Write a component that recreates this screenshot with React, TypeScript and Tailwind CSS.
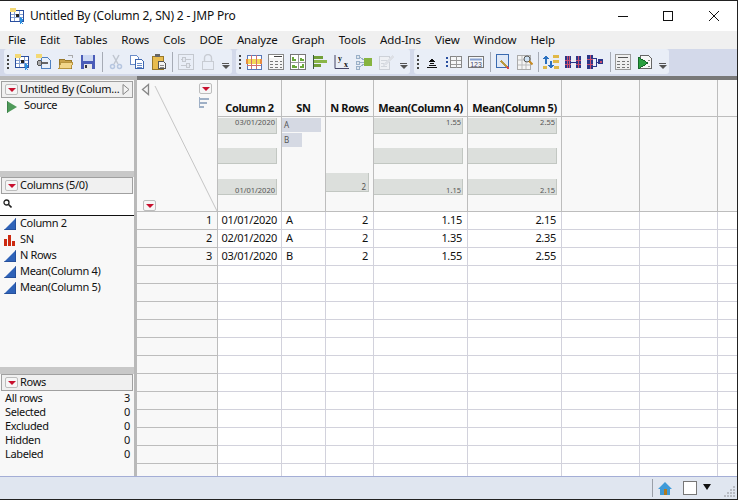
import type { ReactNode } from "react";

const menus = ["File", "Edit", "Tables", "Rows", "Cols", "DOE", "Analyze", "Graph", "Tools", "Add-Ins", "View", "Window", "Help"];
const font = "font-['Noto_Sans',sans-serif]";

function Ico({ children }: { children: ReactNode }) {
  return (
    <svg width="16" height="16" viewBox="0 0 16 16" shapeRendering="crispEdges">
      {children}
    </svg>
  );
}

function TableIcon() {
  return (
    <Ico>
      <rect x="1.5" y="2.5" width="13" height="11" fill="#fff" stroke="#2a4f9f" />
      <path d="M2 6h12M2 9.5h12M5.5 3v10M10 3v10" stroke="#86a0d0" />
      <rect x="1" y="0" width="6" height="4" fill="#f3d976" />
      <rect x="7" y="6" width="3" height="3" fill="#222" />
      <path d="M11 9l4 3-2 1 1 3-2-1-1 1z" fill="#2a8fe0" />
    </Ico>
  );
}
function WandIcon() {
  return (
    <Ico>
      <path d="M5.5 3.5h6l3 3v8h-9z" fill="#e8f0fa" stroke="#4f80c0" />
      <rect x="0" y="0" width="6" height="4" fill="#f3d976" />
      <rect x="3" y="8" width="9" height="2" fill="#666" />
      <circle cx="3.5" cy="9" r="2.5" fill="#aaa" stroke="#555" />
    </Ico>
  );
}
function OpenIcon() {
  return (
    <Ico>
      <path d="M1 5h5l1 1h6v8H1z" fill="#c9a24a" stroke="#98782a" />
      <path d="M3 8h12l-2 6H1z" fill="#f2d68a" stroke="#b8943e" />
      <path d="M10 1h4v3" fill="none" stroke="#aaa" />
    </Ico>
  );
}
function SaveIcon() {
  return (
    <Ico>
      <rect x="1" y="1" width="14" height="14" fill="#4a5cb8" />
      <rect x="3" y="1" width="10" height="6" fill="#ccd8f2" />
      <rect x="4" y="10" width="8" height="5" fill="#e8e8e8" />
      <rect x="5" y="11" width="2" height="3" fill="#334" />
    </Ico>
  );
}
function ScissorsIcon() {
  return (
    <Ico>
      <path d="M5 1l5 9M11 1l-5 9" stroke="#c0c6d0" strokeWidth="1.5" fill="none" shapeRendering="auto" />
      <circle cx="4.5" cy="12.5" r="2" fill="none" stroke="#b6c6e0" strokeWidth="1.5" shapeRendering="auto" />
      <circle cx="11.5" cy="12.5" r="2" fill="none" stroke="#b6c6e0" strokeWidth="1.5" shapeRendering="auto" />
    </Ico>
  );
}
function CopyIcon() {
  return (
    <Ico>
      <path d="M1.5 1.5h6l2 2v7h-8z" fill="#fff" stroke="#6a8cc8" />
      <path d="M6.5 5.5h6l2 2v7h-8z" fill="#fff" stroke="#3c66b0" />
      <path d="M8 9h5M8 11h5M8 13h5" stroke="#6a8cc8" />
    </Ico>
  );
}
function PasteIcon() {
  return (
    <Ico>
      <rect x="1" y="2" width="11" height="13" fill="#e8bc50" stroke="#98782a" />
      <rect x="4" y="0" width="5" height="3" fill="#666" />
      <path d="M7.5 7.5h5l2 2v5h-7z" fill="#f4f4f4" stroke="#555" />
      <path d="M9 11h4M9 13h4" stroke="#888" />
    </Ico>
  );
}
function ScriptBoxIcon() {
  return (
    <Ico>
      <rect x="0.5" y="0.5" width="15" height="15" fill="none" stroke="#c4c8cf" />
      <path d="M3 5h10M3 11h10" stroke="#c4c8cf" />
      <rect x="4.5" y="3" width="3" height="4" fill="#e4e8f0" stroke="#c4c8cf" />
      <rect x="8.5" y="9" width="3" height="4" fill="#e4e8f0" stroke="#c4c8cf" />
    </Ico>
  );
}
function LockIcon() {
  return (
    <Ico>
      <path d="M4.5 7V4a3.5 3.5 0 017 0v3" fill="none" stroke="#c8ccd3" strokeWidth="1.4" shapeRendering="auto" />
      <rect x="2.5" y="7.5" width="11" height="8" fill="none" stroke="#c8ccd3" />
    </Ico>
  );
}
function ColoredTableIcon() {
  return (
    <Ico>
      <rect x="1" y="1" width="14" height="14" fill="#fff" stroke="#5a78b8" />
      <rect x="0" y="5" width="16" height="5" fill="#f4d858" />
      <rect x="0" y="5" width="2" height="5" fill="#e88a40" />
      <rect x="14" y="5" width="2" height="5" fill="#e88a40" />
      <path d="M5 1v14M10 1v14M1 11h14" stroke="#d07070" />
    </Ico>
  );
}
function PlainTableIcon() {
  return (
    <Ico>
      <rect x="0.5" y="0.5" width="15" height="15" fill="#f4f4f4" stroke="#888" />
      <rect x="1" y="1" width="14" height="3" fill="#fff" />
      <path d="M6 2.5h8" stroke="#444" />
      <path d="M2 7h3M7 7h3M12 7h2M2 10h3M7 10h3M12 10h2M2 13h3M7 13h3M12 13h2" stroke="#777" />
    </Ico>
  );
}
function GreenGridIcon() {
  return (
    <Ico>
      <rect x="0.5" y="0.5" width="15" height="15" fill="#fff" stroke="#777" />
      <path d="M8 1v14M1 8h14" stroke="#999" />
      <path d="M2 7V3h2v2h2v2zM10 7V4h2v1h2v2zM2 14v-3h3v1h2v2zM10 14v-2h2v-2h2v4z" fill="#6aa83c" />
    </Ico>
  );
}
function BarsIcon() {
  return (
    <Ico>
      <path d="M1.5 1v14" stroke="#3a5a3a" />
      <rect x="2" y="2" width="9" height="3" fill="#72a038" />
      <rect x="2" y="6" width="13" height="3" fill="#8ab648" />
      <rect x="2" y="10" width="7" height="3" fill="#72a038" />
    </Ico>
  );
}
function FitIcon() {
  return (
    <svg width="16" height="16" viewBox="0 0 16 16">
      <path d="M1 1v13.5h14" fill="none" stroke="#446" />
      <text x="4" y="7" fontSize="8" fontWeight="700" fontFamily="Liberation Serif" fill="#111">y</text>
      <text x="10" y="13" fontSize="8" fontWeight="700" fontFamily="Liberation Serif" fill="#111">x</text>
    </svg>
  );
}
function NodesIcon() {
  return (
    <Ico>
      <rect x="8" y="4" width="8" height="8" fill="#86b440" />
      <path d="M2 2l6 4M2 8h6M2 14l6-4" stroke="#9ab0c8" />
      <rect x="0" y="1" width="3" height="3" fill="#dfe6ee" stroke="#9ab0c8" />
      <rect x="0" y="7" width="3" height="3" fill="#dfe6ee" stroke="#9ab0c8" />
      <rect x="0" y="12" width="3" height="3" fill="#dfe6ee" stroke="#9ab0c8" />
    </Ico>
  );
}
function NotepadIcon() {
  return (
    <Ico>
      <path d="M1.5 2.5h10v13h-10z" fill="#eef0f4" stroke="#cdd1d8" />
      <path d="M3 6h7M3 9h5M3 12h6" stroke="#d2d6dc" />
      <path d="M14 1l2 2-8 8-3 1 1-3z" fill="#dde0e6" />
    </Ico>
  );
}
function TriangleStackIcon() {
  return (
    <Ico>
      <path d="M8 5l2 2H6zM6 9h4M4.5 11h7M3 13h10" stroke="#111" fill="#111" />
    </Ico>
  );
}
function ColsListIcon() {
  return (
    <Ico>
      <rect x="4.5" y="2.5" width="11" height="11" fill="#f6f7f8" stroke="#888" />
      <path d="M10 2v12M5 6h10M5 10h10" stroke="#999" />
      <path d="M0 4h2M0 8h2M0 12h2" stroke="#2a4f9f" strokeWidth="2" />
    </Ico>
  );
}
function NumbersIcon() {
  return (
    <svg width="16" height="16" viewBox="0 0 16 16">
      <rect x="0.5" y="2.5" width="15" height="11" fill="#f6f7f8" stroke="#777" />
      <path d="M2 5.5h12" stroke="#86a0d0" strokeWidth="2" />
      <text x="8" y="12.5" textAnchor="middle" fontSize="7" fontFamily="Liberation Sans" fill="#446">123</text>
    </svg>
  );
}
function PencilBoxIcon() {
  return (
    <Ico>
      <rect x="1.5" y="0.5" width="12" height="13" fill="#dfe8f6" stroke="#3a6ab0" />
      <path d="M6 7l6 6" stroke="#b89a40" strokeWidth="2" />
      <path d="M12 13l2 2" stroke="#d84848" strokeWidth="2" />
    </Ico>
  );
}
function SearchGridIcon() {
  return (
    <svg width="16" height="16" viewBox="0 0 16 16">
      <rect x="0.5" y="1.5" width="13" height="14" fill="#f4f4f4" stroke="#aaa" />
      <path d="M5 2v13M9 2v13M1 6h12M1 11h12" stroke="#bbb" />
      <circle cx="10" cy="5" r="3" fill="#cfe3f5" stroke="#555" />
      <path d="M12 7l3.5 3.5" stroke="#c78a20" strokeWidth="2" />
    </svg>
  );
}
function SortIcon() {
  return (
    <Ico>
      <path d="M3 1l3 4H4v5H2V5H0z" fill="#2a70c0" />
      <path d="M8 15l-3-4h2V7h2v4h2z" fill="#2a70c0" />
      <rect x="10" y="1" width="6" height="3" fill="#e0b848" />
      <rect x="10" y="6" width="6" height="3" fill="#e0b848" />
      <rect x="0" y="12" width="4" height="3" fill="#e0b848" />
      <rect x="11" y="12" width="5" height="3" fill="#e0b848" />
    </Ico>
  );
}
function JoinIcon() {
  return (
    <Ico>
      <rect x="0" y="2" width="6" height="12" fill="#2a3688" />
      <path d="M2 2v12M4 2v12M0 6h6M0 10h6" stroke="#c85070" />
      <rect x="11" y="2" width="5" height="12" fill="#2a3688" />
      <path d="M13 2v12M11 6h5M11 10h5" stroke="#c85070" />
      <path d="M6 8h5" stroke="#2a3688" />
    </Ico>
  );
}
function TreeIcon() {
  return (
    <Ico>
      <rect x="0" y="1" width="6" height="14" fill="#2a3688" />
      <path d="M3 1v14M0 5h6M0 10h6" stroke="#c85070" />
      <path d="M6 4h3v4h3M9 8v4H6" fill="none" stroke="#2a3688" />
      <rect x="11" y="5" width="5" height="5" fill="#2a3688" />
      <rect x="13" y="7" width="2" height="2" fill="#c85070" />
    </Ico>
  );
}
function CalcIcon() {
  return (
    <Ico>
      <rect x="0.5" y="0.5" width="15" height="15" fill="#f0f0f0" stroke="#999" />
      <path d="M3 3h10" stroke="#555" />
      <path d="M2 7h3M7 7h3M12 7h2M2 10h3M7 10h3M12 10h2M2 13h3M7 13h3M12 13h2" stroke="#777" />
    </Ico>
  );
}
function RunScriptIcon() {
  return (
    <Ico>
      <path d="M3.5 1.5h8l3 3v10h-11z" fill="#f8f8f8" stroke="#666" />
      <path d="M1 3l10 6-10 6z" fill="#2aa040" stroke="#17682a" />
      <path d="M11 6h2M11 12h2" stroke="#888" />
    </Ico>
  );
}

function Slot({ children }: { children: ReactNode }) {
  return <div className="flex w-[22px] items-center justify-center">{children}</div>;
}
function Grip() {
  return (
    <div className="flex w-[7px] flex-col items-end gap-[2px]">
      <span className="mr-[2px] h-[2px] w-[2px] bg-[#444]" />
      <span className="mr-[2px] h-[2px] w-[2px] bg-[#444]" />
      <span className="mr-[2px] h-[2px] w-[2px] bg-[#444]" />
      <span className="mr-[2px] h-[2px] w-[2px] bg-[#444]" />
    </div>
  );
}
function Overflow() {
  return (
    <div className="flex h-full w-[13px] flex-col items-center justify-end gap-[1px] pb-[5px]">
      <span className="h-[1px] w-[7px] bg-[#555]" />
      <span className="h-0 w-0 border-x-[4px] border-t-[4px] border-x-transparent border-t-[#555]" />
    </div>
  );
}
function Sep({ className }: { className: string }) {
  return <div className={`h-[20px] w-[1px] bg-[#a6abb5] ${className}`} />;
}
function Group({ children, className }: { children: ReactNode; className: string }) {
  return <div className={`flex h-[25px] items-center rounded-[3px] bg-[#e9eef7] ${className}`}>{children}</div>;
}

function RedButton() {
  return (
    <span className="flex h-[11px] w-[13px] shrink-0 items-center justify-center rounded-[2px] border border-[#bdbdbd] bg-[#f6f6f6]">
      <span className="h-0 w-0 border-x-[4px] border-t-[4px] border-x-transparent border-t-[#c8102e]" />
    </span>
  );
}

function PanelHeader({ children, right }: { children: ReactNode; right?: ReactNode }) {
  return (
    <div className="mx-[1px] flex h-[17px] shrink-0 items-center gap-[2px] border border-[#a0a0a0] bg-[#f0f0f0] pl-[3px] text-[11px] tracking-[-0.3px] text-[#111]">
      <RedButton />
      <span className="mb-[2px] flex-1 whitespace-nowrap">{children}</span>
      {right}
    </div>
  );
}

function ContinuousIcon() {
  return (
    <svg width="12" height="12" viewBox="0 0 12 12">
      <path d="M0 12L12 0v12z" fill="#2e62b8" />
      <path d="M12 0v12H0" fill="none" stroke="#1d3f80" />
    </svg>
  );
}
function NominalIcon() {
  return (
    <svg width="12" height="12" viewBox="0 0 12 12" shapeRendering="crispEdges">
      <rect x="0" y="5" width="3" height="7" fill="#cc2a10" />
      <rect x="4" y="1" width="3" height="11" fill="#cc2a10" />
      <rect x="8" y="7" width="3" height="5" fill="#cc2a10" />
    </svg>
  );
}

const columnList = [
  { name: "Column 2", nominal: false },
  { name: "SN", nominal: true },
  { name: "N Rows", nominal: false },
  { name: "Mean(Column 4)", nominal: false },
  { name: "Mean(Column 5)", nominal: false },
];
const rowStats = [
  ["All rows", 3],
  ["Selected", 0],
  ["Excluded", 0],
  ["Hidden", 0],
  ["Labeled", 0],
] as const;

const widths = ["w-[64px]", "w-[44px]", "w-[48px]", "w-[94px]", "w-[94px]", "w-[78px]", "w-[78px]", "flex-1"];
const heads = ["Column 2", "SN", "N Rows", "Mean(Column 4)", "Mean(Column 5)", "", "", ""];
const data = [
  ["01/01/2020", "A", "2", "1.15", "2.15"],
  ["02/01/2020", "A", "2", "1.35", "2.35"],
  ["03/01/2020", "B", "2", "1.55", "2.55"],
];

function ContBars({ hi, lo, width }: { hi: string; lo: string; width: string }) {
  const bar = `h-[16px] ${width} border-r border-b border-[#c2c7c2] bg-[#dcdfdc] text-right text-[7.5px] text-[#555] pr-[1px]`;
  return (
    <div className="flex flex-col pt-[1px]">
      <div className={`${bar} leading-[9px]`}>{hi}</div>
      <div className={`${bar} mt-[14px]`} />
      <div className={`${bar} mt-[15px] flex items-end justify-end leading-[7px]`}>{lo}</div>
    </div>
  );
}

export default function App() {
  const rows = Array.from({ length: 15 }, (_, i) => i);
  return (
    <div className={`flex h-[500px] w-[738px] flex-col overflow-hidden border-t border-r border-b border-[#222] bg-white ${font} text-[12px] leading-none text-[#111]`}>
      {/* title bar */}
      <div className="flex h-[30px] shrink-0 items-center bg-white pl-[9px]">
        <TableIcon />
        <span className="ml-[5px] text-[12px] tracking-[-0.18px]">Untitled By (Column 2, SN) 2 - JMP Pro</span>
        <div className="ml-auto flex items-center pr-[18px]">
          <span className="h-[1px] w-[10px] bg-[#111]" />
          <span className="ml-[35px] h-[10px] w-[10px] border border-[#111]" />
          <svg width="10" height="10" viewBox="0 0 10 10" className="ml-[36px]">
            <path d="M0 0l10 10M10 0L0 10" stroke="#111" strokeWidth="1" />
          </svg>
        </div>
      </div>

      {/* menu bar */}
      <div className="flex h-[18px] shrink-0 items-center gap-[14px] bg-[#f0f0f0] pl-[8px] text-[11.5px] tracking-[-0.12px]">
        {menus.map((m) => (
          <span key={m}>{m}</span>
        ))}
      </div>

      {/* toolbars */}
      <div className="flex h-[27px] shrink-0 gap-[4px] bg-[#d3d9ea] pl-[4px]">
        <Group className="w-[228px]">
          <Grip />
          <Slot><TableIcon /></Slot>
          <Slot><WandIcon /></Slot>
          <Slot><OpenIcon /></Slot>
          <Slot><SaveIcon /></Slot>
          <Sep className="ml-[3px] mr-[2px]" />
          <Slot><ScissorsIcon /></Slot>
          <Slot><CopyIcon /></Slot>
          <Slot><PasteIcon /></Slot>
          <Sep className="ml-[2px] mr-[2px]" />
          <Slot><ScriptBoxIcon /></Slot>
          <Slot><LockIcon /></Slot>
          <Overflow />
        </Group>
        <Group className="w-[174px]">
          <Grip />
          <Slot><ColoredTableIcon /></Slot>
          <Slot><PlainTableIcon /></Slot>
          <Slot><GreenGridIcon /></Slot>
          <Slot><BarsIcon /></Slot>
          <Slot><FitIcon /></Slot>
          <Slot><NodesIcon /></Slot>
          <Slot><NotepadIcon /></Slot>
          <Overflow />
        </Group>
        <Group className="w-[255px]">
          <Grip />
          <Slot><TriangleStackIcon /></Slot>
          <Slot><ColsListIcon /></Slot>
          <Slot><NumbersIcon /></Slot>
          <Sep className="ml-[3px] mr-[1px]" />
          <Slot><PencilBoxIcon /></Slot>
          <Slot><SearchGridIcon /></Slot>
          <Sep className="ml-[2px] mr-[1px]" />
          <Slot><SortIcon /></Slot>
          <Slot><JoinIcon /></Slot>
          <Slot><TreeIcon /></Slot>
          <Sep className="ml-[4px] mr-[1px]" />
          <Slot><CalcIcon /></Slot>
          <Slot><RunScriptIcon /></Slot>
          <Overflow />
        </Group>
      </div>

      {/* strip above the panels */}
      <div className="flex h-[4px] shrink-0">
        <div className="w-[137px] bg-[#b9b9b9]" />
        <div className="flex-1 bg-[#787878]" />
      </div>

      <div className="flex min-h-0 flex-1">
        {/* left panels */}
        <div className="flex w-[137px] shrink-0 flex-col border-r-[3px] border-[#b9b9b9] bg-[#f8f8f8] text-[11px] tracking-[-0.35px]">
          <div className="flex h-[91px] shrink-0 flex-col pt-[1px]">
            <PanelHeader
              right={
                <svg width="8" height="11" viewBox="0 0 8 11" className="mr-[2px]">
                  <path d="M1 .5l6 5-6 5z" fill="#f4f4f4" stroke="#888" />
                </svg>
              }
            >
              Untitled By (Colum...
            </PanelHeader>
            <div className="flex items-center pl-[7px] pt-[1px]">
              <svg width="10" height="12" viewBox="0 0 10 12">
                <path d="M0 0l10 6-10 6z" fill="#4f9a5a" />
                <path d="M0 0v12" stroke="#2f6a3a" />
              </svg>
              <span className="mb-[4px] ml-[7px]">Source</span>
            </div>
          </div>
          <div className="h-[6px] shrink-0 bg-[#c8c8c8]" />
          <div className="flex h-[190px] shrink-0 flex-col">
            <PanelHeader>Columns (5/0)</PanelHeader>
            <div className="flex h-[22px] shrink-0 items-center border-b border-[#111] bg-white pl-[3px]">
              <svg width="9" height="9" viewBox="0 0 9 9" className="mb-[2px]">
                <circle cx="3.5" cy="3.5" r="2.5" fill="none" stroke="#222" strokeWidth="1.3" />
                <path d="M5.5 5.5L8.5 8.5" stroke="#222" strokeWidth="1.6" />
              </svg>
            </div>
            <div className="flex flex-col">
              {columnList.map((c) => (
                <div key={c.name} className="flex h-[16px] items-center pl-[4px]">
                  {c.nominal ? <NominalIcon /> : <ContinuousIcon />}
                  <span className="mb-[4px] ml-[4px] whitespace-nowrap">{c.name}</span>
                </div>
              ))}
            </div>
          </div>
          <div className="h-[7px] shrink-0 bg-[#c8c8c8]" />
          <div className="flex flex-1 flex-col">
            <PanelHeader>Rows</PanelHeader>
            <div className="flex flex-col">
              {rowStats.map(([label, n]) => (
                <div key={label} className="flex h-[14px] items-center justify-between pb-[2px] pl-[5px] pr-[4px]">
                  <span>{label}</span>
                  <span>{n}</span>
                </div>
              ))}
            </div>
          </div>
        </div>

        {/* data grid */}
        <div className="flex min-w-0 flex-1 flex-col overflow-hidden bg-white text-[11px] tracking-[-0.3px]">
          <div className="flex h-[132px] shrink-0 border-b border-[#bdbdbd] bg-[#f8f8f8]">
            <div className="relative w-[81px] shrink-0 border-r border-[#bdbdbd]">
              <svg width="81" height="132" viewBox="0 0 81 132" className="absolute inset-0">
                <path d="M18 6L80 131" stroke="#c6c6c6" fill="none" />
                <path d="M11.5 4.5l-6 5 6 5z" fill="#f4f4f4" stroke="#888" strokeWidth="1.3" />
                <path d="M62.5 17v11" stroke="#9fb0c6" />
                <path d="M63 18h9v2H63zM63 22h7v2h-7zM63 26h4v2h-4z" fill="#9fb0c6" />
              </svg>
              <div className="absolute left-[62px] top-[3px]"><RedButton /></div>
              <div className="absolute left-[6px] top-[120px]"><RedButton /></div>
            </div>
            <div className="flex flex-1 flex-col">
              <div className="flex h-[37px] shrink-0 border-b border-[#bdbdbd]">
                {heads.map((h, i) => (
                  <div key={i} className={`${widths[i]} flex items-end justify-center whitespace-nowrap border-r border-[#bdbdbd] pb-[3px] text-[11px] font-bold tracking-[-0.35px] last:border-r-0`}>
                    {h}
                  </div>
                ))}
              </div>
              <div className="flex flex-1 tracking-normal">
                <div className={`${widths[0]} border-r border-[#bdbdbd]`}>
                  <ContBars hi="03/01/2020" lo="01/01/2020" width="w-[59px]" />
                </div>
                <div className={`${widths[1]} flex flex-col border-r border-[#bdbdbd] pt-[1px] text-[8px] leading-[14px] text-[#555]`}>
                  <div className="h-[14px] w-[39px] bg-[#d5d9e3] pl-[2px]">A</div>
                  <div className="mt-[1px] h-[14px] w-[20px] bg-[#d5d9e3] pl-[2px]">B</div>
                </div>
                <div className={`${widths[2]} flex flex-col border-r border-[#bdbdbd] pt-[56px]`}>
                  <div className="flex h-[19px] w-[43px] items-end justify-end border-r border-b border-[#c2c7c2] bg-[#dcdfdc] pr-[2px] text-[8px] leading-[8px] text-[#555]">2</div>
                </div>
                <div className={`${widths[3]} border-r border-[#bdbdbd]`}>
                  <ContBars hi="1.55" lo="1.15" width="w-[89px]" />
                </div>
                <div className={`${widths[4]} border-r border-[#bdbdbd]`}>
                  <ContBars hi="2.55" lo="2.15" width="w-[89px]" />
                </div>
                <div className={`${widths[5]} border-r border-[#bdbdbd]`} />
                <div className={`${widths[6]} border-r border-[#bdbdbd]`} />
                <div className={widths[7]} />
              </div>
            </div>
          </div>

          {rows.map((r) => {
            const row = data[r];
            return (
              <div key={r} className="flex h-[18px] shrink-0">
                <div className="flex w-[81px] shrink-0 items-center justify-end border-r border-b border-[#bdbdbd] bg-[#f8f8f8] pb-[2px] pr-[5px]">
                  {row ? r + 1 : ""}
                </div>
                {widths.map((w, i) => (
                  <div
                    key={i}
                    className={`${w} flex items-center whitespace-nowrap border-r border-b border-[#d2d2dc] pb-[2px] last:border-r-0 ${i === 0 ? "justify-end pr-[4px]" : i === 1 ? "pl-[4px]" : "justify-end pr-[5px]"}`}
                  >
                    {row?.[i] ?? ""}
                  </div>
                ))}
              </div>
            );
          })}
        </div>
      </div>

      {/* status bar */}
      <div className="flex h-[23px] shrink-0 items-center border-t border-[#a4aed6] bg-[#e0e6f0]">
        <div className="ml-auto h-[18px] w-[1px] bg-[#9a9fa8]" />
        <svg width="14" height="13" viewBox="0 0 14 13" className="ml-[5px]">
          <path d="M7 0L0 7h2v6h10V7h2z" fill="#3f9ad8" />
          <rect x="6" y="7" width="3" height="6" fill="#b07a20" />
        </svg>
        <span className="ml-[11px] h-[14px] w-[14px] border border-[#777] bg-white" />
        <span className="ml-[6px] mb-[3px] h-0 w-0 border-x-[4px] border-t-[6px] border-x-transparent border-t-[#111]" />
        <svg width="12" height="12" viewBox="0 0 12 12" className="ml-[13px] mr-[1px] mt-[8px]" shapeRendering="crispEdges">
          <path d="M9 0h2v2H9zM6 3h2v2H6zM9 3h2v2H9zM3 6h2v2H3zM6 6h2v2H6zM9 6h2v2H9zM0 9h2v2H0zM3 9h2v2H3zM6 9h2v2H6zM9 9h2v2H9z" fill="#b8bcc4" />
        </svg>
      </div>
    </div>
  );
}
